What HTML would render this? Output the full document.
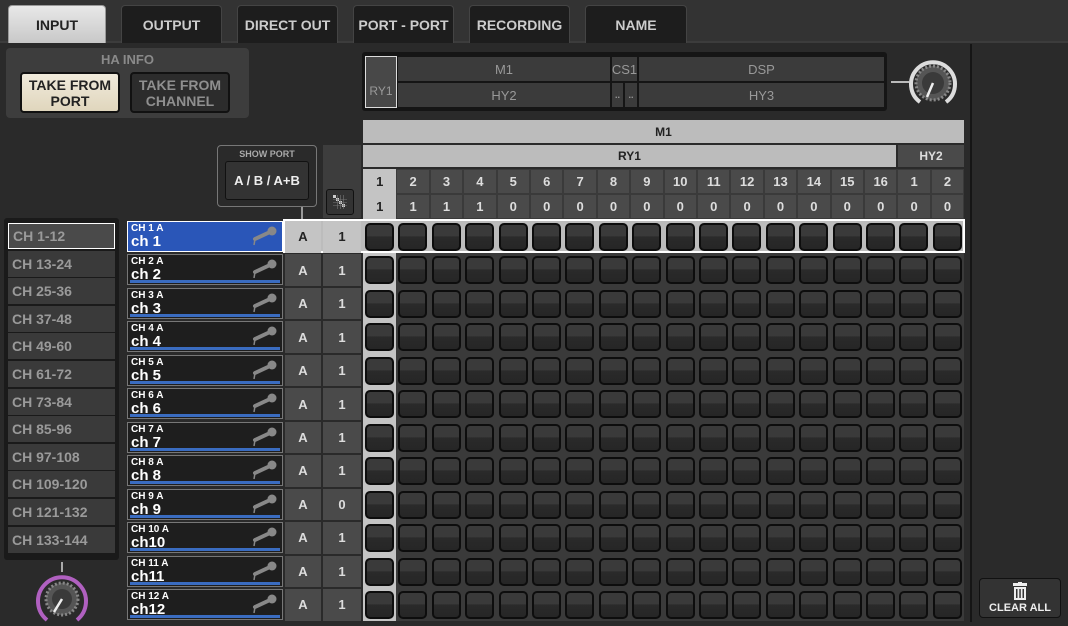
<!DOCTYPE html>
<html><head><meta charset="utf-8">
<style>
*{box-sizing:border-box;margin:0;padding:0}
body{width:1068px;height:622px;background:#2a2a2a;font-family:"Liberation Sans",Arial,sans-serif;font-weight:bold;position:relative;overflow:hidden}
.a{position:absolute}
.tab{position:absolute;top:5px;height:38px;background:#1d1d1d;border:1px solid #444;border-bottom:none;border-radius:4px 4px 0 0;color:#ccc;font-size:14px;display:flex;align-items:center;justify-content:center}
.c{display:flex;align-items:center;justify-content:center;text-align:center}
.btn{position:absolute;background:#2a2a2a;border:2px solid #0d0d0d;border-radius:5px;background:linear-gradient(#3a3a3a 0,#3a3a3a 45%,#2a2a2a 50%,#262626 100%)}
.hdr{position:absolute;background:#4a4a4a;color:#ddd;font-size:13px;display:flex;align-items:center;justify-content:center}
.bank{position:absolute;left:8px;width:107px;height:26px;background:#3a3a3a;color:#9a9a9a;font-size:14px;padding-left:4px;display:flex;align-items:center}
.name{position:absolute;left:127px;width:156px;height:31px;background:#1e1e1e;border:1px solid #777;color:#fff}
.name .s{position:absolute;left:3px;top:1px;font-size:10px}
.name .b{position:absolute;left:3px;top:11px;font-size:15px}
.name .u{position:absolute;left:2px;right:2px;bottom:1px;height:3px;background:#3a6cc0}
.cell{position:absolute;background:#4a4a4a;color:#ddd;font-size:13px;display:flex;align-items:center;justify-content:center}
</style></head><body>
<div class="a" style="left:0;top:0;width:1068px;height:43px;background:#333;border-bottom:2px solid #3c3c3c"></div>
<div class="tab" style="left:8px;width:98px;background:linear-gradient(#e8e8e8,#c8c8c8);color:#222;border-color:#999">INPUT</div>
<div class="tab" style="left:121px;width:101px">OUTPUT</div>
<div class="tab" style="left:237px;width:101px">DIRECT OUT</div>
<div class="tab" style="left:353px;width:101px">PORT - PORT</div>
<div class="tab" style="left:469px;width:101px">RECORDING</div>
<div class="tab" style="left:585px;width:102px">NAME</div>
<div class="a" style="left:970px;top:44px;width:2px;height:578px;background:#151515"></div>

<div class="a" style="left:6px;top:48px;width:243px;height:70px;background:#3d3d3d;border-radius:4px"></div>
<div class="a c" style="left:6px;top:52px;width:243px;font-size:13px;color:#8a8a8a">HA INFO</div>
<div class="a c" style="left:20px;top:72px;width:100px;height:41px;background:linear-gradient(#f0eadb,#e0d6bd);border:2px solid #111;border-radius:4px;color:#222;font-size:14px;line-height:16px">TAKE FROM<br>PORT</div>
<div class="a c" style="left:130px;top:72px;width:100px;height:41px;background:#2c2c2c;border:2px solid #111;border-radius:4px;color:#8f8f8f;font-size:14px;line-height:16px">TAKE FROM<br>CHANNEL</div>

<div class="a" style="left:217px;top:145px;width:100px;height:62px;border:1px solid #777;border-radius:4px;background:#2a2a2a"></div>
<div class="a c" style="left:217px;top:149px;width:100px;font-size:9px;color:#aaa">SHOW PORT</div>
<div class="a c" style="left:225px;top:161px;width:84px;height:39px;background:#333;border:1px solid #111;border-radius:3px;color:#eee;font-size:13px">A / B / A+B</div>
<div class="a" style="left:301px;top:207px;width:2px;height:12px;background:#999"></div>
<div class="a" style="left:323px;top:145px;width:38px;height:73px;background:#3d3d3d"></div>
<div class="a" style="left:326px;top:189px;width:28px;height:26px;background:#333;border:1px solid #111;border-radius:3px"></div>
<svg class="a" style="left:333px;top:195px" width="14" height="14"><g fill="#ccc"><rect x="0" y="0" width="3" height="3"/><rect x="3" y="3" width="3" height="3"/><rect x="6" y="6" width="3" height="3"/><rect x="9" y="9" width="3" height="3"/></g><g stroke="#777" stroke-width=".6" fill="none"><path d="M0 4.5h14M0 7.5h14M0 10.5h14M4.5 0v14M7.5 0v14M10.5 0v14"/></g></svg>

<!-- top overview -->
<div class="a" style="left:362px;top:52px;width:525px;height:59px;background:#151515;border-radius:3px"></div>
<div class="a" style="left:365px;top:56px;width:32px;height:52px;background:#484848;border:1px solid #ddd"></div>
<div class="a c" style="left:366px;top:84px;width:30px;font-size:12px;color:#999;font-weight:normal">RY1</div>
<div class="hdr" style="left:398px;top:57px;width:212px;height:24px;background:#3b3b3b;color:#999;font-weight:normal">M1</div>
<div class="hdr" style="left:612px;top:57px;width:25px;height:24px;background:#3b3b3b;color:#999;font-weight:normal">CS1</div>
<div class="hdr" style="left:639px;top:57px;width:245px;height:24px;background:#3b3b3b;color:#999;font-weight:normal">DSP</div>
<div class="hdr" style="left:398px;top:83px;width:212px;height:24px;background:#3b3b3b;color:#999;font-weight:normal">HY2</div>
<div class="hdr" style="left:612px;top:83px;width:11px;height:24px;background:#3b3b3b;color:#999;font-size:9px">..</div>
<div class="hdr" style="left:625px;top:83px;width:12px;height:24px;background:#3b3b3b;color:#999;font-size:9px">..</div>
<div class="hdr" style="left:639px;top:83px;width:245px;height:24px;background:#3b3b3b;color:#999;font-weight:normal">HY3</div>
<div class="a" style="left:891px;top:81px;width:18px;height:2px;background:#bbb"></div>
<svg class="a" style="left:906px;top:56px" width="54" height="54"><path d="M14 46 A22 22 0 1 1 40 46" stroke="#ddd" stroke-width="4" fill="none"/><circle cx="27" cy="27" r="17" fill="#555" stroke="#888" stroke-width="3" stroke-dasharray="2 2"/><circle cx="27" cy="27" r="11" fill="#3a3a3a"/><line x1="27" y1="27" x2="21" y2="41" stroke="#eee" stroke-width="2.5"/></svg>

<div class="hdr" style="left:363px;top:120px;width:601px;height:23px;background:#bcbcbc;color:#222;font-size:12px">M1</div>
<div class="hdr" style="left:363px;top:145px;width:533px;height:22px;background:#bcbcbc;color:#222;font-size:12px">RY1</div>
<div class="hdr" style="left:898px;top:145px;width:66px;height:22px;background:#4a4a4a;color:#ddd;font-size:12px">HY2</div>

<div id="g"></div>

<div class="a" style="left:4px;top:218px;width:115px;height:342px;background:#1a1a1a;border-radius:3px"></div>
<div id="bk"></div>
<div class="a" style="left:61px;top:562px;width:2px;height:10px;background:#aaa"></div>
<svg class="a" style="left:35px;top:572px" width="54" height="54"><path d="M12 48 A24 24 0 1 1 42 48" stroke="#b060c0" stroke-width="4" fill="none"/><circle cx="27" cy="27" r="16" fill="#555" stroke="#888" stroke-width="3" stroke-dasharray="2 2"/><circle cx="27" cy="27" r="10" fill="#3a3a3a"/><line x1="27" y1="27" x2="19" y2="40" stroke="#eee" stroke-width="2.5"/></svg>

<div class="a" style="left:979px;top:578px;width:82px;height:40px;background:#333;border:1px solid #111;border-radius:4px"></div>
<svg class="a" style="left:1012px;top:582px" width="16" height="19"><rect x="1" y="1" width="14" height="3" fill="#eee"/><rect x="6" y="0" width="4" height="2" fill="#eee"/><rect x="2" y="5" width="12" height="13" fill="#eee"/><g fill="#333"><rect x="4" y="7" width="1.5" height="9"/><rect x="7.3" y="7" width="1.5" height="9"/><rect x="10.5" y="7" width="1.5" height="9"/></g></svg>
<div class="a c" style="left:979px;top:602px;width:82px;font-size:11px;color:#eee">CLEAR ALL</div>

<script>
var g='',x0=363,w=33.4,y0=220,h=33.45;
var n1=[1,2,3,4,5,6,7,8,9,10,11,12,13,14,15,16,1,2],n2=[1,1,1,1,0,0,0,0,0,0,0,0,0,0,0,0,0,0];
g+='<div class="a" style="left:363px;top:169px;width:601px;height:452px;background:#3a3a3a"></div>';
g+='<div class="a" style="left:363px;top:169px;width:33px;height:452px;background:#c4c4c4"></div>';
for(var i=0;i<18;i++){var x=x0+i*w;
 var s=i==0?'background:#c4c4c4;color:#222;':'';
 g+='<div class="cell" style="left:'+(x+1).toFixed(1)+'px;top:170px;width:31.4px;height:23px;'+s+'">'+n1[i]+'</div>';
 g+='<div class="cell" style="left:'+(x+1).toFixed(1)+'px;top:195px;width:31.4px;height:23px;'+s+'">'+n2[i]+'</div>';}
g+='<div class="a" style="left:283px;top:219px;width:682px;height:34px;background:#bcbcbc;border:2px solid #fff"></div>';
var ch=[1,1,1,1,1,1,1,1,0,1,1,1];
for(var r=0;r<12;r++){var y=y0+r*h;
 for(var i=0;i<18;i++){var x=x0+i*w;
  g+='<div class="btn" style="left:'+(x+2).toFixed(1)+'px;top:'+(y+3).toFixed(1)+'px;width:29px;height:28px"></div>';}
 var sel=r==0;
 var nm=r<9?('ch '+(r+1)):('ch'+(r+1));
 g+='<div class="name" style="top:'+(y+1).toFixed(1)+'px;'+(sel?'background:#2a56b8;border-color:#fff;':'')+'"><div class="s">CH '+(r+1)+' A</div><div class="b">'+nm+'</div>'+(sel?'':'<div class="u"></div>')+
 '<svg class="a" style="right:4px;top:3px" width="28" height="22"><line x1="4" y1="20" x2="5" y2="14" stroke="#888" stroke-width="1.5"/><path d="M5 14 L20 7" stroke="#888" stroke-width="4" stroke-linecap="round"/><circle cx="22" cy="6" r="4.5" fill="#888"/></svg></div>';
 var cs=sel?'background:#c4c4c4;color:#222;':'';
 g+='<div class="cell" style="left:285px;top:'+(y+1).toFixed(1)+'px;width:36px;height:31.5px;'+cs+'">A</div>';
 g+='<div class="cell" style="left:323px;top:'+(y+1).toFixed(1)+'px;width:38px;height:31.5px;'+cs+'">'+ch[r]+'</div>';
}
document.getElementById('g').innerHTML=g;
var b='',L=['CH 1-12','CH 13-24','CH 25-36','CH 37-48','CH 49-60','CH 61-72','CH 73-84','CH 85-96','CH 97-108','CH 109-120','CH 121-132','CH 133-144'];
for(var k=0;k<12;k++){b+='<div class="bank" style="top:'+(223+k*27.6).toFixed(1)+'px;'+(k==0?'background:#4a4a4a;border:1px solid #fff;':'')+'">'+L[k]+'</div>';}
document.getElementById('bk').innerHTML=b;
</script>
</body></html>
